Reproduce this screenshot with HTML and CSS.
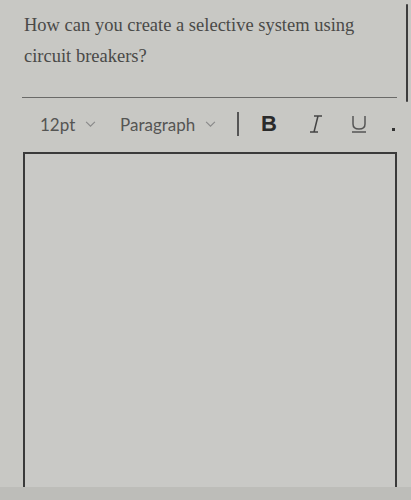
FILE: index.html
```html
<!DOCTYPE html>
<html>
<head>
<meta charset="utf-8">
<link rel="stylesheet" href="styles.css">
</head>
<body>
<div class="page">
  <div class="edge"></div>
  <p class="question">How can you create a selective system using<br>circuit breakers?</p>
  <div class="rule"></div>
  <div class="toolbar">
    <span class="select size">12pt <svg class="chev" viewBox="0 0 12 8" width="11" height="7"><path d="M1 1 L6 6 L11 1" fill="none" stroke="#8a8a8a" stroke-width="1.3"/></svg></span>
    <span class="select para">Paragraph <svg class="chev" viewBox="0 0 12 8" width="11" height="7"><path d="M1 1 L6 6 L11 1" fill="none" stroke="#8a8a8a" stroke-width="1.3"/></svg></span>
    <span class="sep"></span>
    <span class="btn bold">B</span>
    <span class="btn ital"><svg viewBox="0 0 14 18" width="14" height="18"><path d="M5 1 H13 M9 1 L5 17 M1 17 H9" fill="none" stroke="#444" stroke-width="1.5"/></svg></span>
    <span class="btn under"><svg viewBox="0 0 16 18" width="16" height="18"><path d="M2 1 V9 Q2 14 8 14 Q14 14 14 9 V1" fill="none" stroke="#555" stroke-width="1.5"/><path d="M1 17 H15" stroke="#555" stroke-width="1.5"/></svg></span>
    <span class="dot"></span>
  </div>
  <div class="editor"></div>
</div>
<div class="bottom"></div>
</body>
</html>
```
FILE: styles.css
```css
html, body { margin: 0; padding: 0; }
body {
  background: #c8c8c4;
  width: 411px;
  height: 500px;
  overflow: hidden;
  font-family: "Liberation Serif", serif;
}
.page {
  position: relative;
  height: 487px;
  padding: 10px 0 0 24px;
  box-sizing: border-box;
  overflow: hidden;
}
.edge {
  position: absolute;
  right: 3px;
  top: 4px;
  width: 2px;
  height: 98px;
  background: #3c3c3c;
  border-radius: 1px;
}
.question {
  margin: 0;
  font-size: 18.5px;
  line-height: 31px;
  color: #4a4a48;
}
.rule {
  margin: 25px 0 0 -2px;
  width: 375px;
  height: 1px;
  background: #6a6a68;
}
.toolbar {
  display: flex;
  align-items: center;
  height: 28px;
  margin-top: 12px;
  padding-left: 16px;
  font-family: Lato, "Open Sans", sans-serif;
  font-size: 17px;
  color: #555553;
}
.select { display: flex; align-items: center; }
.chev { margin-left: 10px; margin-top: 1px; }
.size { width: 80px; }
.para { width: 117px; }
.sep {
  width: 2px;
  height: 24px;
  background: #555;
  margin-right: 22px;
}
.btn { display: flex; align-items: center; }
.bold {
  font-family: "Liberation Sans", Arial, sans-serif;
  font-weight: bold;
  font-size: 22px;
  color: #2a2a2a;
  width: 48px;
}
.ital { width: 42px; }
.under { width: 41px; }
.dot {
  width: 3px;
  height: 3px;
  background: #333;
  margin-top: 10px;
}
.editor {
  margin-top: 14px;
  margin-left: -1px;
  width: 370px;
  height: 333px;
  border: 2px solid #3a3a3a;
  border-bottom: none;
  background: #c9c9c6;
}
.bottom {
  height: 13px;
  background: #bdbdb9;
}
```
